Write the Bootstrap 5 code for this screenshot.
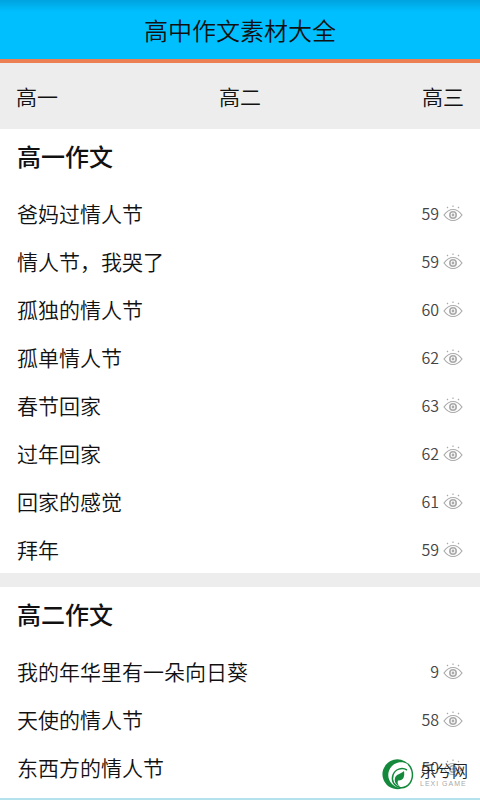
<!DOCTYPE html>
<html lang="zh-CN">
<head>
<meta charset="utf-8">
<meta name="viewport" content="width=device-width, initial-scale=1">
<title>高中作文素材大全</title>
<link href="https://cdn.jsdelivr.net/npm/bootstrap@5.3.0/dist/css/bootstrap.min.css" rel="stylesheet">
<style>
body{font-family:"Noto Sans CJK SC",sans-serif;font-weight:350;color:#111;background:#fff}
.phone-view{height:100vh;overflow:hidden;border-bottom:2px solid #b4e2ec}
.top-bar{height:63px;border-bottom:4px solid #ec8052;background:linear-gradient(#00a3df,#00bfff 12px)}
.top-bar h1{font-size:24px;line-height:36px;font-weight:350}
.grade-tabs{height:66px;background:#ededed}
.grade-tabs a,.essay a{font-size:21px;line-height:32px;color:#111}
.group-title{font-size:24px;line-height:36px;font-weight:500;padding:9px 17px 15px}
.essay{height:48px;padding:0 17px}
.views{font-size:16px;line-height:24px;color:#444;gap:4px}
.views svg{width:20px;height:20px}
.divider{height:14px;background:#ededed}
.site-mark{right:12px;bottom:8px;gap:6px}
.site-mark svg{width:32px;height:32px}
.mark-name{font-size:16px;line-height:20px;color:#222}
.mark-sub{font-family:"Liberation Sans",sans-serif;font-size:7px;line-height:8px;letter-spacing:1px;color:#aaa}
</style>
</head>
<body>
<svg class="d-none" aria-hidden="true"><symbol id="eye" viewBox="0 0 20 20"><g fill="none" stroke="#aaa" stroke-width="1.2"><path d="M1 12Q5 6.500 10 6.500T19 12Q15 17.500 10 17.500T1 12Z"/><circle cx="10" cy="12" r="3.2" stroke-width="1.6"/><circle cx="10" cy="12" r=".8"/><path d="M10 2.500v1.500M4 4l1 1M16 4l-1 1"/></g></symbol></svg>
<div class="phone-view position-relative">
<header class="top-bar d-flex align-items-center justify-content-center"><h1 class="m-0">高中作文素材大全</h1></header>
<nav class="grade-tabs d-flex align-items-center justify-content-between px-3"><a class="text-decoration-none" href="#g1">高一</a><a class="text-decoration-none" href="#g2">高二</a><a class="text-decoration-none" href="#g3">高三</a></nav>
<main>
<section id="g1">
<h2 class="group-title m-0">高一作文</h2>
<ul class="list-unstyled m-0">
<li class="essay d-flex align-items-center justify-content-between"><a class="text-decoration-none" href="#">爸妈过情人节</a><span class="views d-flex align-items-center">59<svg><use href="#eye"/></svg></span></li>
<li class="essay d-flex align-items-center justify-content-between"><a class="text-decoration-none" href="#">情人节，我哭了</a><span class="views d-flex align-items-center">59<svg><use href="#eye"/></svg></span></li>
<li class="essay d-flex align-items-center justify-content-between"><a class="text-decoration-none" href="#">孤独的情人节</a><span class="views d-flex align-items-center">60<svg><use href="#eye"/></svg></span></li>
<li class="essay d-flex align-items-center justify-content-between"><a class="text-decoration-none" href="#">孤单情人节</a><span class="views d-flex align-items-center">62<svg><use href="#eye"/></svg></span></li>
<li class="essay d-flex align-items-center justify-content-between"><a class="text-decoration-none" href="#">春节回家</a><span class="views d-flex align-items-center">63<svg><use href="#eye"/></svg></span></li>
<li class="essay d-flex align-items-center justify-content-between"><a class="text-decoration-none" href="#">过年回家</a><span class="views d-flex align-items-center">62<svg><use href="#eye"/></svg></span></li>
<li class="essay d-flex align-items-center justify-content-between"><a class="text-decoration-none" href="#">回家的感觉</a><span class="views d-flex align-items-center">61<svg><use href="#eye"/></svg></span></li>
<li class="essay d-flex align-items-center justify-content-between"><a class="text-decoration-none" href="#">拜年</a><span class="views d-flex align-items-center">59<svg><use href="#eye"/></svg></span></li>
</ul>
</section>
<div class="divider"></div>
<section id="g2">
<h2 class="group-title m-0">高二作文</h2>
<ul class="list-unstyled m-0">
<li class="essay d-flex align-items-center justify-content-between"><a class="text-decoration-none" href="#">我的年华里有一朵向日葵</a><span class="views d-flex align-items-center">9<svg><use href="#eye"/></svg></span></li>
<li class="essay d-flex align-items-center justify-content-between"><a class="text-decoration-none" href="#">天使的情人节</a><span class="views d-flex align-items-center">58<svg><use href="#eye"/></svg></span></li>
<li class="essay d-flex align-items-center justify-content-between"><a class="text-decoration-none" href="#">东西方的情人节</a><span class="views d-flex align-items-center">50<svg><use href="#eye"/></svg></span></li>
</ul>
</section>
</main>
<div class="site-mark position-absolute d-flex align-items-center">
<svg viewBox="0 0 32 32" aria-hidden="true"><path fill="#14893c" d="M20 30.500A15 15 0 1 1 28 8C23 3 15 3 10 8 5 13 5 21 10 26 13 29 17 30 20 30.500Z"/><path fill="none" stroke="#14893c" stroke-width="1.500" d="M26 6C31 11 32 19 28 25 25 29 21 30 18 29.500 12 28 9 23 11 17 13 11 20 9 25 12"/><path fill="#14893c" d="M22 13C23 19 21 23 16 22.500 15 25 16 27 18 28.500 14 27 12 24 13 20 14 16 19 16 22 13Z"/></svg>
<div><div class="mark-name">乐兮网</div><div class="mark-sub">LEXI GAME</div></div>
</div>
</div>
<script src="https://cdn.jsdelivr.net/npm/bootstrap@5.3.0/dist/js/bootstrap.bundle.min.js"></script>
</body>
</html>
